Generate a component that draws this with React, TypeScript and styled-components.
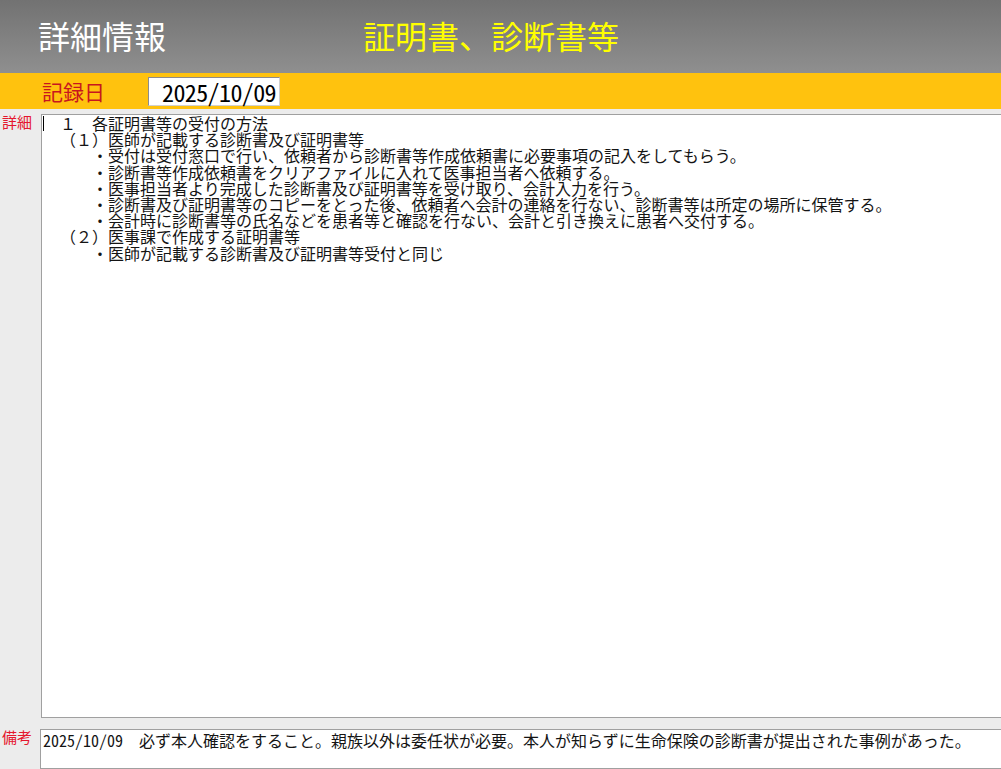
import React from 'react'
import styled, { createGlobalStyle } from 'styled-components'

const GlobalStyle = createGlobalStyle`
  html, body {
    margin: 0;
    padding: 0;
    background: #ececec;
  }
  body {
    font-family: 'Noto Sans CJK JP', 'Noto Sans', sans-serif;
  }
`

const detailLines = [
  '　１　各証明書等の受付の方法',
  '　（１）医師が記載する診断書及び証明書等',
  '　　　・受付は受付窓口で行い、依頼者から診断書等作成依頼書に必要事項の記入をしてもらう。',
  '　　　・診断書等作成依頼書をクリアファイルに入れて医事担当者へ依頼する。',
  '　　　・医事担当者より完成した診断書及び証明書等を受け取り、会計入力を行う。',
  '　　　・診断書及び証明書等のコピーをとった後、依頼者へ会計の連絡を行ない、診断書等は所定の場所に保管する。',
  '　　　・会計時に診断書等の氏名などを患者等と確認を行ない、会計と引き換えに患者へ交付する。',
  '　（２）医事課で作成する証明書等',
  '　　　・医師が記載する診断書及び証明書等受付と同じ',
]

const remarkDate = '2025/10/09'
const remarkText =
  '　必ず本人確認をすること。親族以外は委任状が必要。本人が知らずに生命保険の診断書が提出された事例があった。'

const App: React.FC = () => {
  return (
    <>
      <GlobalStyle />
      <StyledPage>
        <StyledHeader>
          <StyledTitle>詳細情報</StyledTitle>
          <StyledSubject>証明書、診断書等</StyledSubject>
        </StyledHeader>
        <StyledDateBar>
          <StyledDateLabel>記録日</StyledDateLabel>
          <StyledDateBox>2025/10/09</StyledDateBox>
        </StyledDateBar>
        <StyledBody>
          <StyledFieldRow>
            <StyledFieldLabel>詳細</StyledFieldLabel>
            <StyledTextBox offset={1}>
              {detailLines.map((line, i) => (
                <StyledLine key={i}>
                  {i === 0 && <StyledCaret />}
                  {line}
                </StyledLine>
              ))}
            </StyledTextBox>
          </StyledFieldRow>
          <StyledFieldRow>
            <StyledFieldLabel>備考</StyledFieldLabel>
            <StyledTextBox offset={0} padTop={2}>
              <StyledLine>
                <StyledHalfWidth>{remarkDate}</StyledHalfWidth>
                {remarkText}
              </StyledLine>
            </StyledTextBox>
          </StyledFieldRow>
        </StyledBody>
      </StyledPage>
    </>
  )
}

const StyledPage = styled.div`
  display: flex;
  flex-direction: column;
  width: 100vw;
  height: 100vh;
  overflow: hidden;
  background: #ececec;
`

const StyledHeader = styled.div`
  display: flex;
  align-items: center;
  height: 73px;
  padding-left: 38px;
  gap: 197px;
  background: linear-gradient(#727272, #8f8f8f);
  flex: none;
`

const StyledTitle = styled.div`
  font-size: 32px;
  line-height: 36px;
  color: #ffffff;
  padding-bottom: 4px;
`

const StyledSubject = styled.div`
  font-size: 32px;
  line-height: 36px;
  color: #ffff00;
  padding-bottom: 4px;
`

const StyledDateBar = styled.div`
  display: flex;
  align-items: center;
  height: 36px;
  padding-left: 42px;
  gap: 43px;
  background: #ffc20e;
  flex: none;
`

const StyledDateLabel = styled.div`
  font-size: 21px;
  line-height: 24px;
  color: #c8161e;
  white-space: nowrap;
`

const StyledDateBox = styled.div`
  box-sizing: border-box;
  width: 132px;
  height: 29px;
  margin-top: 1px;
  padding-right: 3px;
  background: #ffffff;
  border: 1px solid #8c8c8c;
  border-right-color: #d0d0d0;
  border-bottom-color: #d0d0d0;
  font-size: 24px;
  line-height: 27px;
  letter-spacing: -0.6px;
  text-align: right;
  color: #000000;
  font-feature-settings: 'hwid';
`

const StyledBody = styled.div`
  flex: 1;
  display: grid;
  grid-template-rows: 604px 1fr;
  row-gap: 11px;
  padding-top: 5px;
  min-height: 0;
`

const StyledFieldRow = styled.div`
  display: flex;
  min-height: 0;
`

const StyledFieldLabel = styled.div`
  width: 40px;
  flex: none;
  padding-left: 2px;
  box-sizing: border-box;
  font-size: 15px;
  line-height: 16px;
  color: #e5172e;
  white-space: nowrap;
`

const StyledTextBox = styled.div<{ offset: number; padTop?: number }>`
  flex: 1;
  margin-left: ${(props) => props.offset}px;
  margin-right: -6px;
  padding: ${(props) => props.padTop || 0}px 2px 0;
  background: #ffffff;
  border: 1px solid #a0a0a0;
  font-size: 16px;
  line-height: 16.2px;
  color: #141414;
  text-spacing-trim: space-all;
  overflow: hidden;
`

const StyledLine = styled.div`
  white-space: pre;
  position: relative;
`

const StyledHalfWidth = styled.span`
  font-feature-settings: 'hwid';
`

const StyledCaret = styled.span`
  position: absolute;
  left: -1px;
  top: 1px;
  width: 1px;
  height: 15px;
  background: #000000;
`

export default App
